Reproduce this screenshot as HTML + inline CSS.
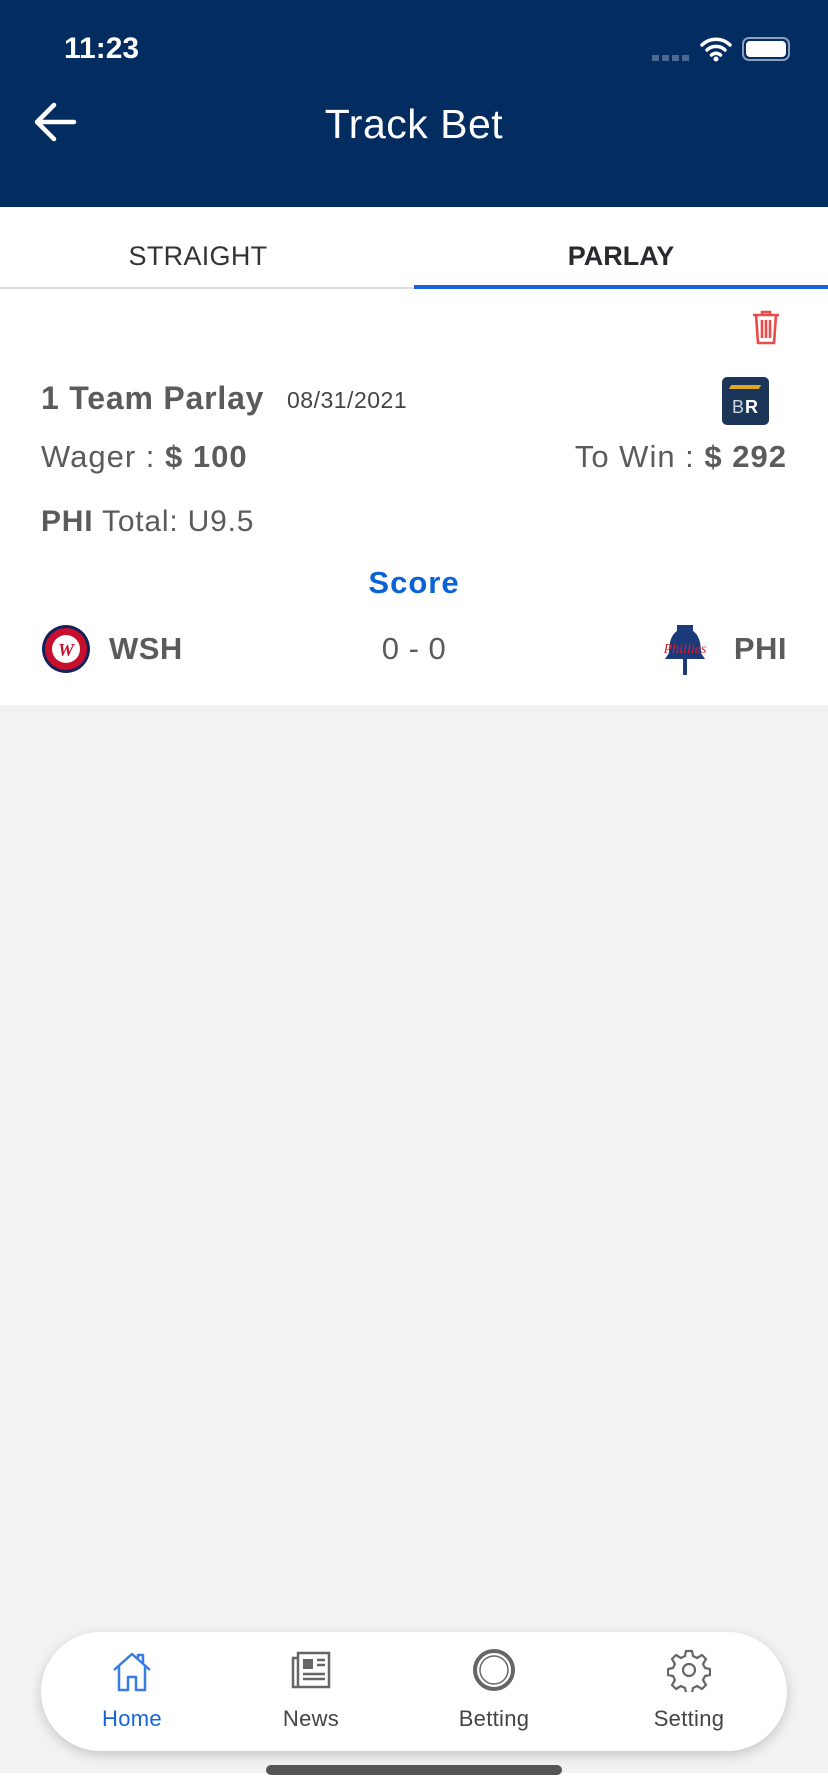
<!DOCTYPE html>
<html><head><meta charset="utf-8">
<style>
*{margin:0;padding:0;box-sizing:border-box}
body{width:828px;height:1792px;background:#f2f2f2;font-family:"Liberation Sans",sans-serif;position:relative;overflow:hidden;color:#5b5b5e}
.hdr{position:absolute;left:0;top:0;width:828px;height:207px;background:#032c60}
.abs{position:absolute}
.tabs{position:absolute;left:0;top:207px;width:828px;height:82px;background:#fff}
.card{position:absolute;left:0;top:289px;width:828px;height:416px;background:#fff}
.nav{position:absolute;left:41px;top:1632px;width:746px;height:119px;background:#fff;border-radius:60px;box-shadow:0 4px 12px rgba(0,0,0,.18)}
.lbl{position:absolute;top:74px;font-size:22px;color:#444;width:120px;text-align:center;letter-spacing:0.3px}
</style></head><body>
<div class="hdr">
  <div class="abs" style="left:64px;top:32px;font-size:30px;color:#fff;font-weight:bold">11:23</div>
  <div class="abs" style="left:652px;top:55px;width:38px;height:6px;background:repeating-linear-gradient(90deg,#4a6a94 0 7px,transparent 7px 10px)"></div>
  <svg class="abs" style="left:700px;top:36px" width="32" height="26" viewBox="0 0 32 26"><path d="M2 9a20 20 0 0 1 28 0M7 14a13 13 0 0 1 18 0M11.5 19a6.5 6.5 0 0 1 9 0" stroke="#fff" stroke-width="3.5" fill="none" stroke-linecap="round"/><circle cx="16" cy="23" r="2.5" fill="#fff"/></svg>
  <div class="abs" style="left:742px;top:37px;width:48px;height:24px;border:2px solid #8aa0bd;border-radius:7px;padding:2px"><div style="width:100%;height:100%;background:#fff;border-radius:4px"></div></div>
  <svg class="abs" style="left:32px;top:100px" width="46" height="44" viewBox="0 0 46 44"><path d="M42 22H6M22 5L5 22l17 17" stroke="#fff" stroke-width="4.5" fill="none" stroke-linecap="round" stroke-linejoin="round"/></svg>
  <div class="abs" style="left:0;width:828px;top:101px;text-align:center;font-size:41px;color:#fff;letter-spacing:0.5px">Track Bet</div>
</div>
<div class="tabs">
  <div class="abs" style="left:0;width:396px;top:34px;text-align:center;font-size:27px;color:#333;letter-spacing:0.3px">STRAIGHT</div>
  <div class="abs" style="left:414px;width:414px;top:34px;text-align:center;font-size:27px;color:#2a2a2e;font-weight:bold">PARLAY</div>
  <div class="abs" style="left:0;top:80px;width:414px;height:2px;background:#ddd"></div>
  <div class="abs" style="left:414px;top:78px;width:414px;height:4px;background:#1565d8"></div>
</div>
<div class="card">
  <svg class="abs" style="left:751px;top:20px" width="30" height="36" viewBox="0 0 30 36"><path d="M2 6h26M11 6V3h8v3M5 6l2 28h16l2-28M11 11v18M15 11v18M19 11v18" stroke="#ea4b4b" stroke-width="2.6" fill="none"/></svg>
  <div class="abs" style="left:41px;top:91px;font-size:32px;font-weight:bold;letter-spacing:0.8px">1 Team Parlay</div>
  <div class="abs" style="left:287px;top:98px;font-size:23px;color:#444;letter-spacing:0.5px">08/31/2021</div>
  <div class="abs" style="left:722px;top:88px;width:47px;height:48px;background:#1b3558;border-radius:5px;color:#fff;font-size:18px;font-weight:bold;text-align:center;padding-top:20px;letter-spacing:1px"><span style="font-weight:normal;color:#cfd6e0">B</span>R<div class="abs" style="left:8px;top:8px;width:30px;height:4px;background:#e0a820;transform:skewX(-30deg)"></div></div>
  <div class="abs" style="left:41px;top:150px;font-size:31px;letter-spacing:1px">Wager : <b>$ 100</b></div>
  <div class="abs" style="right:41px;top:150px;font-size:31px;letter-spacing:1px">To Win : <b>$ 292</b></div>
  <div class="abs" style="left:41px;top:216px;font-size:30px;letter-spacing:0.8px"><b>PHI</b> Total: U9.5</div>
  <div class="abs" style="left:0;width:828px;top:276px;text-align:center;font-size:31px;font-weight:bold;color:#0a63d6;letter-spacing:1px">Score</div>
  <svg class="abs" style="left:41px;top:335px" width="50" height="50" viewBox="0 0 50 50"><circle cx="25" cy="25" r="24" fill="#14225a"/><circle cx="25" cy="25" r="21" fill="#c8102e"/><circle cx="25" cy="25" r="14" fill="#fff"/><text x="25" y="32" font-size="18" font-style="italic" font-weight="bold" fill="#c8102e" text-anchor="middle" font-family="Liberation Serif">W</text></svg>
  <div class="abs" style="left:109px;top:342px;font-size:31px;font-weight:bold;letter-spacing:0.5px">WSH</div>
  <div class="abs" style="left:0;width:828px;top:342px;text-align:center;font-size:31px;letter-spacing:0.5px">0 - 0</div>
  <svg class="abs" style="left:660px;top:332px" width="50" height="58" viewBox="0 0 50 58"><path d="M17 4h16v6c6 4 8 12 8 22l4 6H5l4-6c0-10 2-18 8-22z" fill="#1a3a7a"/><rect x="23" y="38" width="4" height="16" fill="#1a3a7a"/><text x="25" y="32" font-size="14" font-style="italic" fill="#d0202e" text-anchor="middle" font-family="Liberation Serif">Phillies</text></svg>
  <div class="abs" style="right:41px;top:342px;font-size:31px;font-weight:bold;letter-spacing:0.5px">PHI</div>
</div>
<div class="nav">
  <svg class="abs" style="left:69px;top:18px" width="44" height="44" viewBox="0 0 44 44"><path d="M4 20L22 4l18 16M9 16v24h9V27h8v13h9V16M28 9V5h5v9" stroke="#3a7de0" stroke-width="2.5" fill="none" stroke-linejoin="round"/></svg>
  <div class="lbl" style="left:31px;color:#1565d8">Home</div>
  <svg class="abs" style="left:249px;top:18px" width="42" height="40" viewBox="0 0 42 40"><rect x="8" y="3" width="31" height="34" fill="none" stroke="#666" stroke-width="2.5"/><path d="M8 8H3v29h5" fill="none" stroke="#666" stroke-width="2.5"/><rect x="13" y="9" width="10" height="10" fill="#666"/><path d="M27 10h8M27 15h8M13 24h22M13 29h22" stroke="#666" stroke-width="2.5"/></svg>
  <div class="lbl" style="left:210px">News</div>
  <svg class="abs" style="left:431px;top:16px" width="44" height="44" viewBox="0 0 44 44"><circle cx="22" cy="22" r="19" fill="none" stroke="#666" stroke-width="4"/><circle cx="22" cy="22" r="14" fill="none" stroke="#666" stroke-width="1.5"/></svg>
  <div class="lbl" style="left:393px">Betting</div>
  <svg class="abs" style="left:626px;top:16px" width="44" height="44" viewBox="0 0 44 44"><path d="M19 3h6l1 5 4 2 5-3 4 4-3 5 2 4 5 1v6l-5 1-2 4 3 5-4 4-5-3-4 2-1 5h-6l-1-5-4-2-5 3-4-4 3-5-2-4-5-1v-6l5-1 2-4-3-5 4-4 5 3 4-2z" fill="none" stroke="#666" stroke-width="2.2" stroke-linejoin="round"/><circle cx="22" cy="22" r="6" fill="none" stroke="#666" stroke-width="2.2"/></svg>
  <div class="lbl" style="left:588px">Setting</div>
</div>
<div class="abs" style="left:0;top:1773px;width:828px;height:19px;background:#fff"></div>
<div class="abs" style="left:266px;top:1765px;width:296px;height:10px;background:#555;border-radius:5px"></div>
</body></html>
